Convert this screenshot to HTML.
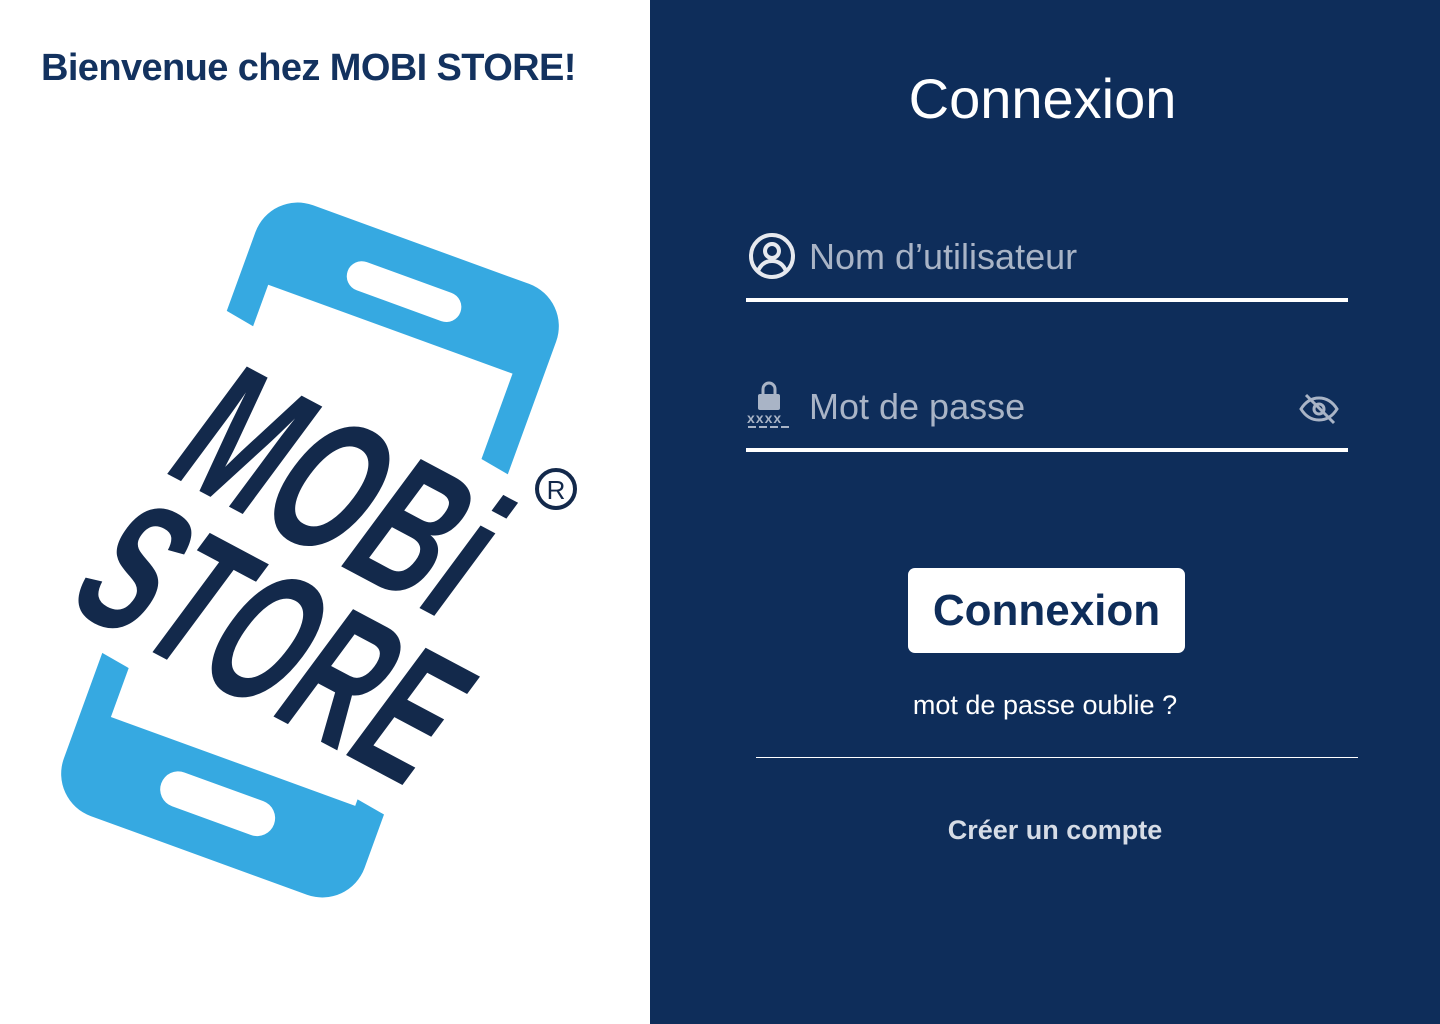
<!DOCTYPE html>
<html><head><meta charset="utf-8"><style>
*{margin:0;padding:0;box-sizing:border-box}
body{width:1440px;height:1024px;position:relative;background:#fff;font-family:"Liberation Sans",sans-serif;overflow:hidden}
.t{position:absolute;white-space:nowrap}
#right{position:absolute;left:650px;top:0;width:790px;height:1024px;background:#0e2d5a}
</style></head><body>
<div class="t" style="left:41px;top:47px;font-size:38px;font-weight:bold;color:#13325f;letter-spacing:-0.6px">Bienvenue chez MOBI STORE!</div>
<svg style="position:absolute;left:0;top:0" width="650" height="1024">
<g transform="translate(310,550) rotate(20)">
<rect x="-160" y="-325" width="320" height="650" rx="45" fill="#36a9e1"/>
<rect x="-130" y="-235" width="260" height="460" fill="#fff"/>
<polygon points="-170,-198 170,-137 170,225 -170,166" fill="#fff"/>
<rect x="-60" y="-290" width="120" height="30" rx="15" fill="#fff"/>
<rect x="-60" y="252" width="120" height="36" rx="18" fill="#fff"/>
</g>
<g font-family="Liberation Sans" font-weight="bold" fill="#13294b" stroke="#fff" stroke-width="10" paint-order="stroke" stroke-linejoin="round">
<text transform="translate(160,470) skewY(28) skewX(-28) scale(0.72,1.45)" font-size="150">MOBi</text>
<text transform="translate(62,604) skewY(28) skewX(-28) scale(0.67,1.45)" font-size="150">STORE</text>
</g>
<circle cx="556" cy="489" r="19" fill="#fff" stroke="#13294b" stroke-width="4"/>
<text x="556" y="499" font-size="26" font-family="Liberation Sans" text-anchor="middle" fill="#13294b">R</text>
</svg>
<div id="right">
<div class="t" style="left:0;width:785px;text-align:center;top:66px;font-size:56px;color:#fff">Connexion</div>
<svg style="position:absolute;left:98px;top:232px" width="48" height="48" viewBox="0 0 48 48" fill="none" stroke="#e6e9ef" stroke-width="4"><circle cx="24" cy="24" r="21"/><circle cx="24" cy="19" r="7"/><path d="M10 39c3-7 8-10 14-10s11 3 14 10"/></svg>
<div class="t" style="left:159px;top:236px;font-size:36px;color:#a9b4c6">Nom d’utilisateur</div>
<div style="position:absolute;left:96px;top:298px;width:602px;height:4px;background:#fff"></div>
<svg style="position:absolute;left:97px;top:380px" width="46" height="50" viewBox="0 0 46 50"><path d="M16 14v-5a6 6 0 0 1 12 0v5" fill="none" stroke="#a9b4c6" stroke-width="3"/><rect x="11" y="14" width="22" height="16" rx="2" fill="#a9b4c6"/><text x="0" y="43" font-size="14" font-weight="bold" font-family="Liberation Sans" fill="#a9b4c6" letter-spacing="1">xxxx</text><path d="M1 47h44" stroke="#a9b4c6" stroke-width="2" stroke-dasharray="8 3"/></svg>
<div class="t" style="left:159px;top:386px;font-size:36px;color:#a9b4c6">Mot de passe</div>
<svg style="position:absolute;left:648px;top:392px" width="42" height="34" viewBox="0 0 42 34" fill="none" stroke="#a9b4c6" stroke-width="3"><path d="M3 17c5-8 11-11 18-11s13 3 18 11c-5 8-11 11-18 11S8 25 3 17z"/><circle cx="21" cy="17" r="5"/><path d="M8 3l28 28"/></svg>
<div style="position:absolute;left:96px;top:448px;width:602px;height:4px;background:#fff"></div>
<div style="position:absolute;left:258px;top:568px;width:277px;height:85px;background:#fff;border-radius:7px;text-align:center;line-height:85px;font-size:44px;font-weight:bold;color:#0e2d5a">Connexion</div>
<div class="t" style="left:0;width:790px;text-align:center;top:690px;font-size:27px;color:#fff">mot de passe oublie ?</div>
<div style="position:absolute;left:106px;top:757px;width:602px;height:1px;background:#fff"></div>
<div class="t" style="left:0;width:810px;text-align:center;top:815px;font-size:27px;font-weight:bold;color:#d6dce6">Créer un compte</div>
</div>
</body></html>
